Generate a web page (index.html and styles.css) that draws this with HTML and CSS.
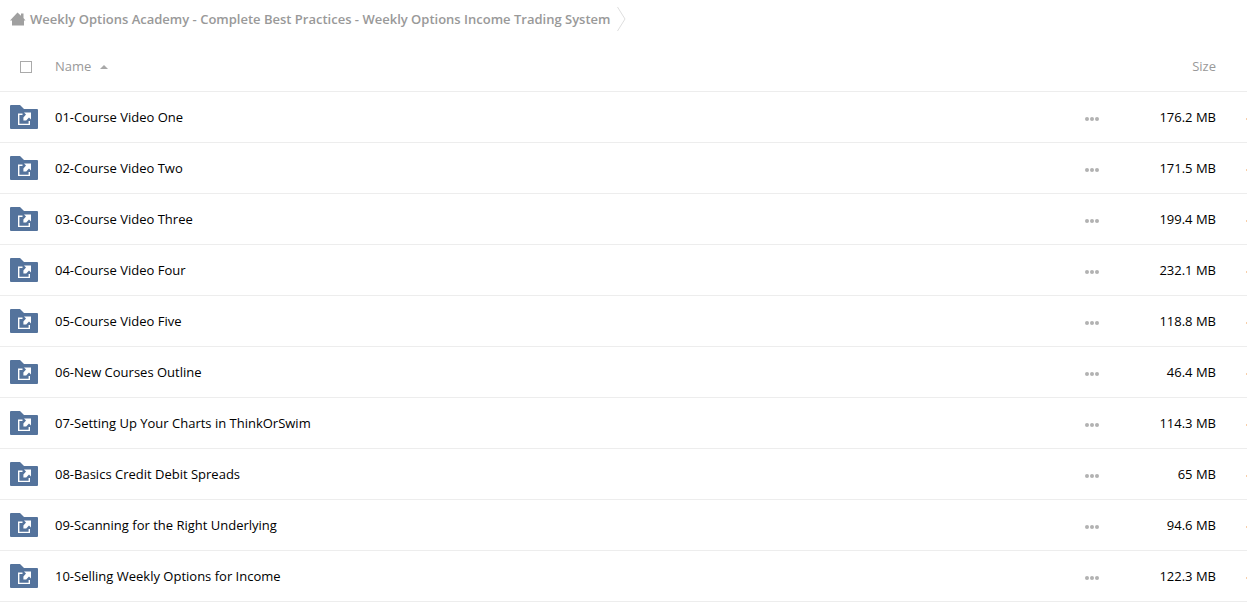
FILE: index.html
```html
<!DOCTYPE html>
<html lang="en">
<head>
<meta charset="utf-8">
<title>Weekly Options Academy</title>
<link rel="stylesheet" href="styles.css">
</head>
<body>
<svg class="sprites" aria-hidden="true">
  <symbol id="folder" viewBox="0 0 28 24">
    <path fill="#54739c" d="M1 0H10L14 4H27Q28 4 28 5V23Q28 24 27 24H1Q0 24 0 23V1Q0 0 1 0Z"/>
    <path fill="none" stroke="#fff" stroke-width="1.4" d="M12.5 9.2H8.7V19.4H19.3V16"/>
    <path fill="#fff" d="M14 7.6H21V14.6L19 12.6L16.2 15.4H13.4V12.4L16 9.6Z"/>
  </symbol>
  <symbol id="dots" viewBox="0 0 14 4">
    <g fill="#b2b2b2"><circle cx="2" cy="2" r="2"/><circle cx="7" cy="2" r="2"/><circle cx="12" cy="2" r="2"/></g>
  </symbol>
</svg>
<nav class="crumbs" aria-label="Breadcrumb">
  <a class="crumb" href="#">
    <svg class="home" viewBox="0 0 16 14" aria-hidden="true"><path fill="#a0a0a0" d="M7.5 .5L11 3.8V1.5H13.5V6L15.5 8.5H14V13.5H2V8.5H0Z"/></svg>
    <span>Weekly Options Academy - Complete Best Practices - Weekly Options Income Trading System</span>
  </a>
  <svg class="chevron" viewBox="0 0 9 24" aria-hidden="true"><path fill="none" stroke="#dedede" d="M.5 0L8 12L.5 24"/></svg>
</nav>
<table class="files">
  <thead>
    <tr>
      <th class="pick"><input class="check" type="checkbox" aria-label="Select all"></th>
      <th class="name"><button class="sort" type="button">Name <svg class="arrow" viewBox="0 0 8 4" aria-hidden="true"><path fill="#a8a8a8" d="M0 4L4 0L8 4Z"/></svg></button></th>
      <th class="more"></th>
      <th class="size">Size</th>
      <th class="edge"></th>
    </tr>
  </thead>
  <tbody id="rows"></tbody>
</table>
<script src="files.js"></script>
</body>
</html>
```
FILE: styles.css
```css
* {
  box-sizing: border-box;
}

body {
  margin: 0;
  background: #fff;
  color: #000;
  font: 13px/20px "Open Sans", "Noto Sans", sans-serif;
  overflow: hidden;
}

svg {
  display: block;
}

.sprites {
  display: none;
}

.crumbs {
  display: flex;
  align-items: center;
  gap: 6px;
  height: 38px;
  margin-bottom: 2px;
  padding: 0 10px;
}

.crumb {
  display: flex;
  align-items: center;
  gap: 4px;
  color: #999;
  font-weight: 600;
  text-decoration: none;
}

.home {
  width: 16px;
  height: 14px;
}

.chevron {
  width: 9px;
  height: 24px;
}

.files {
  width: 100%;
  table-layout: fixed;
  border-spacing: 0;
}

th,
td {
  height: 52px;
  padding: 0;
  border-bottom: 1px solid #ededed;
  font-weight: 400;
  text-align: left;
  vertical-align: middle;
}

td {
  height: 51px;
}

th {
  color: #999;
}

.pick {
  width: 55px;
  padding-left: 10px;
}

th.pick {
  padding-left: 20px;
}

.check {
  display: block;
  width: 12px;
  height: 12px;
  margin: 2px 0 0;
  appearance: none;
  background: #fff;
  border: 1px solid #aaa;
}

.folder {
  width: 28px;
  height: 24px;
}

.item {
  color: inherit;
  text-decoration: none;
}

.sort,
.menu {
  display: flex;
  align-items: center;
  padding: 0;
  background: none;
  border: 0;
  color: inherit;
  font: inherit;
}

.sort {
  gap: 9px;
}

.arrow {
  width: 8px;
  height: 4px;
  margin-top: 2px;
}

.more {
  width: 34px;
}

.menu {
  padding-top: 4px;
}

.dots {
  width: 14px;
  height: 4px;
}

.size {
  width: 97px;
  text-align: right;
}

.edge {
  width: 31px;
}

.tick {
  display: block;
  width: 1px;
  height: 2px;
  margin: 4px 0 0 auto;
  background: #f8cfaa;
}
```
FILE: files.js
```js
const files = [
  ["01-Course Video One", "176.2 MB"],
  ["02-Course Video Two", "171.5 MB"],
  ["03-Course Video Three", "199.4 MB"],
  ["04-Course Video Four", "232.1 MB"],
  ["05-Course Video Five", "118.8 MB"],
  ["06-New Courses Outline", "46.4 MB"],
  ["07-Setting Up Your Charts in ThinkOrSwim", "114.3 MB"],
  ["08-Basics Credit Debit Spreads", "65 MB"],
  ["09-Scanning for the Right Underlying", "94.6 MB"],
  ["10-Selling Weekly Options for Income", "122.3 MB"]
];

document.getElementById("rows").innerHTML = files.map(([name, size]) => `
  <tr>
    <td class="pick"><svg class="folder" aria-hidden="true"><use href="#folder"/></svg></td>
    <td class="name"><a class="item" href="#">${name}</a></td>
    <td class="more"><button class="menu" type="button" aria-label="More actions for ${name}"><svg class="dots" aria-hidden="true"><use href="#dots"/></svg></button></td>
    <td class="size">${size}</td>
    <td class="edge"><span class="tick"></span></td>
  </tr>`).join("");
```
